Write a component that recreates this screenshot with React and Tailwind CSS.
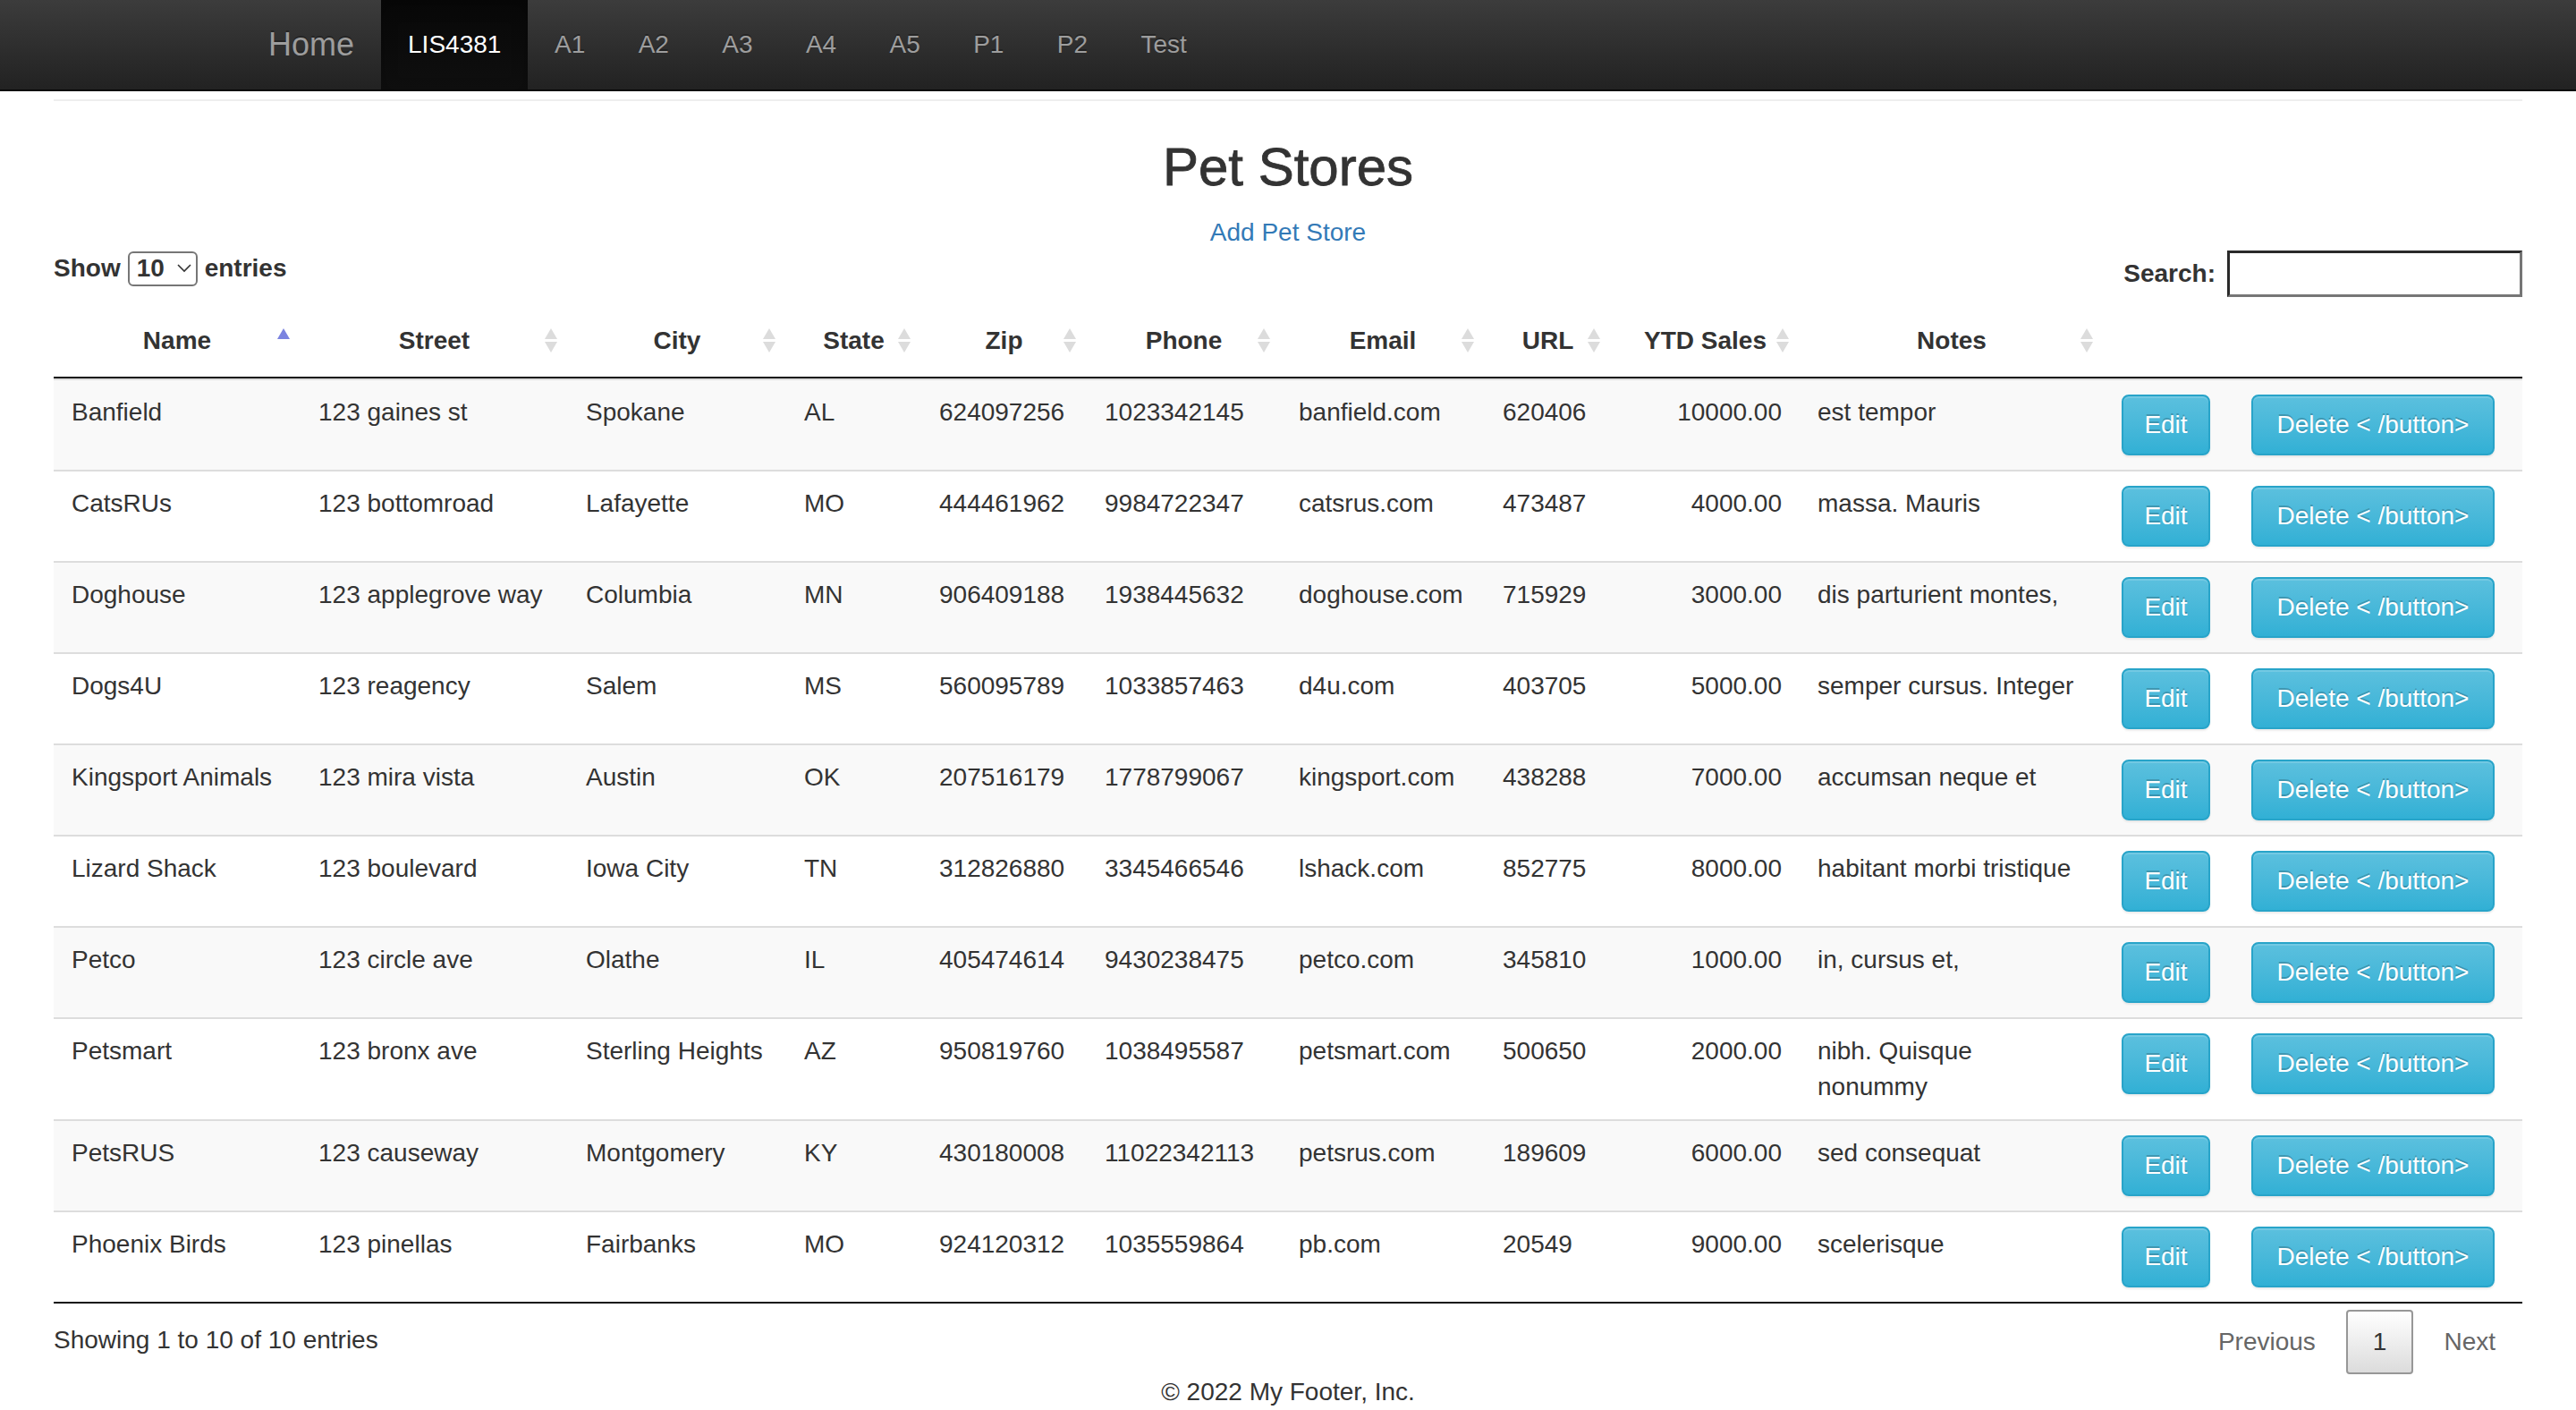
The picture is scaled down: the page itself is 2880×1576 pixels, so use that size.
import React from 'react';

const navItems = ['A1', 'A2', 'A3', 'A4', 'A5', 'P1', 'P2', 'Test'];

const columns = [
  { label: 'Name', w: 'w-[276px]' },
  { label: 'Street', w: 'w-[299px]' },
  { label: 'City', w: 'w-[244px]' },
  { label: 'State', w: 'w-[151px]' },
  { label: 'Zip', w: 'w-[185px]' },
  { label: 'Phone', w: 'w-[217px]' },
  { label: 'Email', w: 'w-[228px]' },
  { label: 'URL', w: 'w-[141px]' },
  { label: 'YTD Sales', w: 'w-[211px]' },
  { label: 'Notes', w: 'w-[340px]' },
  { label: '', w: 'w-[145px]' },
  { label: '', w: 'w-[323px]' },
];

const stores = [
  ['Banfield', '123 gaines st', 'Spokane', 'AL', '624097256', '1023342145', 'banfield.com', '620406', '10000.00', ['est tempor']],
  ['CatsRUs', '123 bottomroad', 'Lafayette', 'MO', '444461962', '9984722347', 'catsrus.com', '473487', '4000.00', ['massa. Mauris']],
  ['Doghouse', '123 applegrove way', 'Columbia', 'MN', '906409188', '1938445632', 'doghouse.com', '715929', '3000.00', ['dis parturient montes,']],
  ['Dogs4U', '123 reagency', 'Salem', 'MS', '560095789', '1033857463', 'd4u.com', '403705', '5000.00', ['semper cursus. Integer']],
  ['Kingsport Animals', '123 mira vista', 'Austin', 'OK', '207516179', '1778799067', 'kingsport.com', '438288', '7000.00', ['accumsan neque et']],
  ['Lizard Shack', '123 boulevard', 'Iowa City', 'TN', '312826880', '3345466546', 'lshack.com', '852775', '8000.00', ['habitant morbi tristique']],
  ['Petco', '123 circle ave', 'Olathe', 'IL', '405474614', '9430238475', 'petco.com', '345810', '1000.00', ['in, cursus et,']],
  ['Petsmart', '123 bronx ave', 'Sterling Heights', 'AZ', '950819760', '1038495587', 'petsmart.com', '500650', '2000.00', ['nibh. Quisque', 'nonummy']],
  ['PetsRUS', '123 causeway', 'Montgomery', 'KY', '430180008', '11022342113', 'petsrus.com', '189609', '6000.00', ['sed consequat']],
  ['Phoenix Birds', '123 pinellas', 'Fairbanks', 'MO', '924120312', '1035559864', 'pb.com', '20549', '9000.00', ['scelerisque']],
];

const SortIcon = ({ active }) => (
  <svg width="16" height="30" viewBox="0 0 16 30" className="absolute right-[11px] top-1/2 -translate-y-1/2">
    <polygon points="8,1 15,13 1,13" fill={active ? '#7b83e0' : '#dcdcdc'} />
    {!active && <polygon points="1,16 15,16 8,28" fill="#dcdcdc" />}
  </svg>
);

const InfoButton = ({ children, w }) => (
  <button className={`inline-block h-[68px] ${w} text-center text-[28px] leading-[40px] text-white border-2 border-[#28a4c9] rounded-[8px] bg-gradient-to-b from-[#5bc0de] to-[#31b0d5] [text-shadow:0_-2px_0_rgba(0,0,0,0.2)] shadow-[inset_0_2px_0_rgba(255,255,255,0.15),0_2px_2px_rgba(0,0,0,0.075)] whitespace-nowrap`}>
    {children}
  </button>
);

export default function App() {
  return (
    <div className="min-h-screen bg-white font-['Liberation_Sans',Arial,sans-serif] text-[28px] leading-[40px] text-[#333]">
      {/* Navbar */}
      <nav className="h-[102px] border-b-2 border-[#080808] bg-gradient-to-b from-[#3c3c3c] to-[#222]">
        <div className="ml-[270px] flex h-[100px] [text-shadow:0_-2px_0_rgba(0,0,0,0.25)]">
          <a className="flex items-center px-[30px] text-[36px] leading-[40px] text-[#9d9d9d]">Home</a>
          <a className="flex items-center px-[30px] text-white bg-gradient-to-b from-[#080808] to-[#0f0f0f] shadow-[inset_0_6px_18px_rgba(0,0,0,0.25)]">LIS4381</a>
          {navItems.map((n) => (
            <a key={n} className="flex items-center px-[29.7px] text-[#9d9d9d]">{n}</a>
          ))}
        </div>
      </nav>

      <main className="px-[60px]">
        <div className="mt-[9px] h-[2px] bg-[#eee]" />

        <h2 className="mt-[41px] text-center text-[60px] leading-[66px] font-medium [-webkit-text-stroke:0.8px_#333]">Pet Stores</h2>
        <p className="mt-[20px] text-center">
          <a className="text-[#337ab7]">Add Pet Store</a>
        </p>

        {/* Table controls */}
        <div className="flex justify-between items-start">
          <label className="flex items-center h-[40px] font-bold">
            Show
            <span className="ml-[8px] mr-[8px] flex items-center h-[39px] w-[78px] border-2 border-[#767676] rounded-[6px] pl-[8px]">
              10
              <svg width="16" height="10" viewBox="0 0 16 10" className="ml-[14px]">
                <polyline points="1,1 8,8 15,1" fill="none" stroke="#333" strokeWidth="1.6" />
              </svg>
            </span>
            entries
          </label>
          <label className="flex items-center font-bold">
            Search:
            <input className="ml-[13px] h-[52px] w-[330px] border-[3px] border-t-[#2a2a2a] border-l-[#2a2a2a] border-r-[#767676] border-b-[#767676] outline-none" />
          </label>
        </div>

        {/* Table */}
        <table className="mt-[9px] w-[2760px] table-fixed border-separate border-spacing-0">
          <colgroup>
            {columns.map((c, i) => (
              <col key={i} className={c.w} />
            ))}
          </colgroup>
          <thead>
            <tr>
              {columns.map((c, i) => (
                <th key={i} className="relative py-[20px] px-[20px] text-center font-bold border-b-2 border-[#111] whitespace-nowrap">
                  {c.label}
                  {c.label && <SortIcon active={i === 0} />}
                </th>
              ))}
            </tr>
          </thead>
          <tbody>
            {stores.map((r, ri) => (
              <tr key={ri} className={ri % 2 === 0 ? 'bg-[#f9f9f9]' : 'bg-white'}>
                {r.slice(0, 9).map((v, ci) => (
                  <td key={ci} className={`align-top py-[16px] px-[20px] border-t-2 border-[#ddd] whitespace-nowrap ${ci === 8 ? 'text-right' : ''}`}>
                    {v}
                  </td>
                ))}
                <td className="align-top py-[16px] px-[20px] border-t-2 border-[#ddd] whitespace-nowrap">
                  {r[9].map((l, li) => (
                    <div key={li}>{l}</div>
                  ))}
                </td>
                <td className="align-top py-[16px] px-[20px] border-t-2 border-[#ddd]">
                  <InfoButton w="w-[99px]">Edit</InfoButton>
                </td>
                <td className="align-top py-[16px] px-[20px] border-t-2 border-[#ddd]">
                  <InfoButton w="w-[272px]">Delete &lt; /button&gt;</InfoButton>
                </td>
              </tr>
            ))}
          </tbody>
        </table>
        <div className="h-[2px] bg-[#111]" />

        {/* Info + pagination */}
        <div className="flex justify-between items-start">
          <div className="pt-[21px]">Showing 1 to 10 of 10 entries</div>
          <div className="pt-[7px] flex">
            <span className="px-[28px] py-[14px] border-2 border-transparent text-[#666]">Previous</span>
            <span className="ml-[4px] px-[28px] py-[14px] border-2 border-[#979797] rounded-[4px] bg-gradient-to-b from-white to-[#dcdcdc] text-[#333]">1</span>
            <span className="ml-[4px] px-[28px] py-[14px] border-2 border-transparent text-[#666]">Next</span>
          </div>
        </div>

        <footer className="text-center">© 2022 My Footer, Inc.</footer>
      </main>
    </div>
  );
}
